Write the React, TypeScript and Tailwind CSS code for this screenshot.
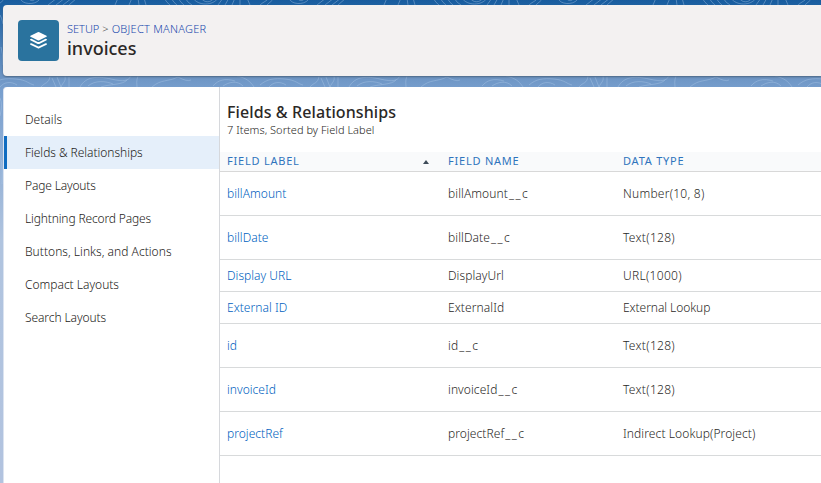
const navItems = [
  { label: "Details", tracking: "tracking-[0.04px]" },
  { label: "Fields & Relationships", tracking: "tracking-[-0.04px]", active: true },
  { label: "Page Layouts", tracking: "tracking-[-0.16px]" },
  { label: "Lightning Record Pages", tracking: "tracking-[-0.14px]" },
  { label: "Buttons, Links, and Actions", tracking: "tracking-[0.03px]" },
  { label: "Compact Layouts", tracking: "tracking-normal" },
  { label: "Search Layouts", tracking: "tracking-[-0.08px]" },
];

const rows = [
  { label: "billAmount", name: "billAmount", custom: true, type: "Number(10, 8)", height: "h-11", tracking: "tracking-[0.25px]" },
  { label: "billDate", name: "billDate", custom: true, type: "Text(128)", height: "h-11", tracking: "tracking-[0.3px]" },
  { label: "Display URL", name: "DisplayUrl", custom: false, type: "URL(1000)", height: "h-8", tracking: "tracking-[0.3px]" },
  { label: "External ID", name: "ExternalId", custom: false, type: "External Lookup", height: "h-8", tracking: "tracking-[-0.06px]" },
  { label: "id", name: "id", custom: true, type: "Text(128)", height: "h-11", tracking: "tracking-[0.3px]" },
  { label: "invoiceId", name: "invoiceId", custom: true, type: "Text(128)", height: "h-11", tracking: "tracking-[0.3px]" },
  { label: "projectRef", name: "projectRef", custom: true, type: "Indirect Lookup(Project)", height: "h-11", tracking: "tracking-[0.1px]" },
];

function Contours() {
  return (
    <svg className="absolute inset-0 h-full w-full" viewBox="0 0 821 483" fill="none" stroke="#b0cbe8" strokeOpacity="0.5" strokeWidth="0.8">
      <defs>
        <g id="swirl">
          <path d="M0 5C3 2 7 1 9-2M7 5C10 2 12 1 14-2M29-2C31 5 44 5 48 0M37-2C40 2 43 1 45-2M57 5l9-7M65 5l9-7M72 5l9-7M78 5l8-7M124 5l3-7M141-2l-3 7M147-2l1 7M153-2l2 7M173-2q3 5 6 7M180-2q3 5 6 7M187-2q3 5 6 7M194-2q3 5 7 7M202-2c5 8 20 8 25 0M210-2c3 5 10 5 13 0M232-2l-5 7M238-2l-4 7M244-2l-3 7M249-2v7M256-2l3 7" />
          <path d="M0 85C7 79 14 78 25 79s13 5 18 6M9 87c4-5 11-6 17-2M50 87c4-5 8-3 9-11M61 78l4 9M66 77l4 10M70 87c2-5 5-5 4-11M78 77v10M89 87c6-11 18-11 31-8s17 2 20-3M97 86c7-6 18-5 25-2M110 87c8-3 22-2 26-7M147 76c-2 5-1 8-1 11M161 87c9-8 16-5 26-10M187 77q9 5 13 3M222 86c5-6 12-8 22-5M232 86c6-4 14-6 20 0M246 76c9 2 13 5 17 11" />
        </g>
      </defs>
      <use href="#swirl" x="-9" />
      <use href="#swirl" x="260" />
      <use href="#swirl" x="529" />
      <use href="#swirl" x="798" />
      <path d="M0 15q2 3 3 9M1 47q2 6 2 18M0 98q3 6 0 18M1 160q2 8 1 24" />
    </svg>
  );
}

function Header() {
  return (
    <header className="ml-[3px] flex h-[71px] items-start rounded-l bg-[#f3f1f1] pt-[15px] pl-[15px] shadow-[0_1px_2px_#4d6785]">
      <div className="flex h-[41px] w-[41px] shrink-0 items-center justify-center rounded bg-[#2a739e]">
        <svg className="h-[19px] w-[19px]" viewBox="0 0 19 19" fill="#fff">
          <path d="M8.700 1.200q.8-.4 1.600 0l7.200 3.500q.8.500 0 1L10.300 9.200q-.8.4-1.600 0L1.500 5.700q-.8-.5 0-1z" />
          <path d="M1.200 8.200l1.300-.4 6.200 3.100q.8.400 1.600 0l6.200-3.100 1.300.4q.6.600-.2 1.100l-7.300 3.600q-.8.400-1.600 0L1.400 9.300q-.8-.5-.2-1.100z" />
          <path d="M1.200 12.600l1.300-.4 6.200 3.100q.8.400 1.600 0l6.200-3.100 1.300.4q.6.600-.2 1.100l-7.300 3.600q-.8.400-1.600 0l-7.300-3.600q-.8-.5-.2-1.100z" />
        </svg>
      </div>
      <div className="ml-2">
        <nav className="flex h-[18px] items-center gap-[3px] text-[11px] leading-[18px] font-light whitespace-nowrap text-[#1747ad]">
          <a>SETUP</a>
          <span className="text-[#3a3836]">&gt;</span>
          <a className="tracking-[0.25px]">OBJECT MANAGER</a>
        </nav>
        <h1 className="text-[18px] leading-5 font-medium text-[#2b2826]">invoices</h1>
      </div>
    </header>
  );
}

export default function App() {
  return (
    <div className="relative h-[483px] w-[821px] overflow-hidden bg-[linear-gradient(#185c9e_0px,#1d62a4_6px,#6c94c3_76px,#789fce_90px,#b0c4df_240px,#b2c3df_483px)] font-['Noto_Sans','Open_Sans',sans-serif]">
      <Contours />
      <div className="relative flex h-full flex-col gap-[11px] pt-[5px]">
        <Header />
        <main className="ml-[3px] flex flex-1 rounded-tl border-l border-[#dbe3f0] bg-white">
          <aside className="w-[216px] shrink-0 border-r border-[#d6d8dc] pt-4">
            {navItems.map((item) => (
              <a
                key={item.label}
                className={`flex h-[33px] items-center border-l-[3px] pl-[18px] text-[12px] font-light whitespace-nowrap text-[#1c1a18] ${item.tracking} ${
                  item.active ? "border-[#106cc0] bg-[#e5effa]" : "border-transparent"
                }`}
              >
                {item.label}
              </a>
            ))}
          </aside>
          <section className="flex-1">
            <div className="h-[65px] pt-[15px] pl-[7px]">
              <h2 className="text-[16px] leading-5 font-medium tracking-[0.1px] text-[#2b2826]">Fields &amp; Relationships</h2>
              <p className="text-[11px] leading-[16px] font-light tracking-[0.04px] text-[#2a2826]">7 Items, Sorted by Field Label</p>
            </div>
            <div className="flex h-5 items-center border-b border-[#d8d8d8] bg-[#f9fafb] pb-px pl-[7px] text-[11px] tracking-[0.78px] text-[#2f74bd]">
              <div className="flex w-[221px] items-center justify-between pr-[19px]">
                FIELD LABEL
                <svg className="mt-0.5 h-1 w-[6px]" viewBox="0 0 6 4" fill="#3e4b58">
                  <path d="M3 0L6 4H0z" />
                </svg>
              </div>
              <div className="w-[175px]">FIELD NAME</div>
              <div>DATA TYPE</div>
            </div>
            {rows.map((row) => (
              <div key={row.label} className={`flex items-center border-b border-[#d8dadb] pl-[7px] text-[12px] font-light whitespace-nowrap text-[#2a2826] ${row.height}`}>
                <a className="w-[221px] tracking-[0.03px] text-[#005fc0]">{row.label}</a>
                <span className="w-[175px] tracking-[0.08px]">
                  {row.name}
                  {row.custom && <><span className="ml-px tracking-[1.5px]">__</span>c</>}
                </span>
                <span className={row.tracking}>{row.type}</span>
              </div>
            ))}
          </section>
        </main>
      </div>
    </div>
  );
}
